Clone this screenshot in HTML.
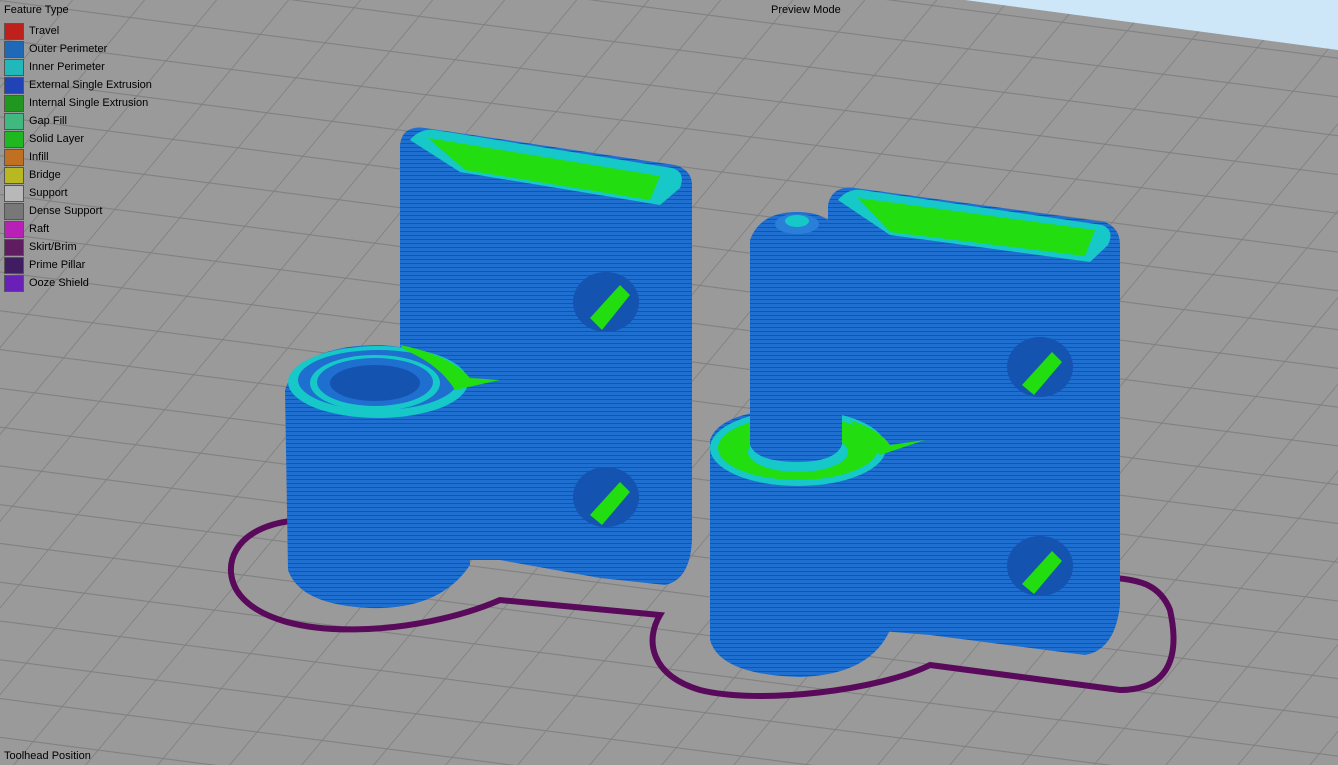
<!DOCTYPE html>
<html><head><style>
html,body{margin:0;padding:0;width:1338px;height:765px;overflow:hidden;background:#9a9a9a;font-family:"Liberation Sans",sans-serif;}
svg{position:absolute;left:0;top:0}
.t{position:absolute;font-size:11px;color:#000;}
.lg{position:absolute;left:4px;top:22px;}
.row{height:18px;display:flex;align-items:center;font-size:11px}
.sw{width:20px;height:17px;border:1px solid #555;box-sizing:border-box;margin-right:5px}
</style></head><body>
<svg width="1338" height="765" viewBox="0 0 1338 765">
<defs>
<pattern id="st" width="4" height="4" patternUnits="userSpaceOnUse">
<rect width="4" height="4" fill="#1f6fd0"/><rect y="3" width="4" height="1" fill="#1553b0"/>
</pattern>
<pattern id="gr" width="65" height="35" patternUnits="userSpaceOnUse" patternTransform="matrix(1 0.13 -0.83 1 0 0)">
<rect x="0" y="0" width="65" height="1" fill="#808080"/>
<rect x="0" y="0" width="1" height="35" fill="#808080"/>
</pattern>
</defs>
<rect width="1338" height="765" fill="url(#gr)"/>
<polygon points="965,0 1338,0 1338,50" fill="#cde6f8"/>
<!-- skirt -->
<path d="M300,520 C230,525 220,570 240,595 C280,645 420,635 500,600 L660,615 C645,640 650,675 700,690 C760,705 880,690 930,665 L1120,690 C1170,690 1180,655 1170,610 C1160,585 1140,580 1115,578" fill="none" stroke="#5a0a5a" stroke-width="6"/>
<!-- left block -->
<path d="M400,145 Q402,125 425,128 L675,165 Q692,170 692,185 L692,540 Q690,580 665,585 L600,578 L500,560 L400,560 Z" fill="url(#st)"/>
<path d="M410,140 Q420,128 435,130 L672,168 Q686,172 680,188 L660,205 L460,172 Z" fill="#17c8c8"/>
<path d="M428,138 L660,176 L650,200 L465,170 Z" fill="#22dd10"/>
<!-- left cylinder -->
<path d="M285,390 Q300,345 380,345 Q430,348 470,370 L500,380 L470,400 L470,565 Q440,610 370,608 Q300,605 288,570 Z" fill="url(#st)"/>
<ellipse cx="378" cy="382" rx="90" ry="36" fill="#17c8c8"/>
<ellipse cx="378" cy="380" rx="80" ry="30" fill="#1f6fd0"/>
<path d="M400,345 Q450,355 470,378 L500,380 L455,390 Q440,365 405,350 Z" fill="#22dd10"/>
<ellipse cx="375" cy="383" rx="65" ry="28" fill="#17c8c8"/>
<ellipse cx="375" cy="382" rx="58" ry="24" fill="#1f6fd0"/>
<ellipse cx="375" cy="383" rx="45" ry="18" fill="#1553b0"/>
<!-- holes left -->
<ellipse cx="606" cy="302" rx="33" ry="30" fill="#1553b0"/>
<path d="M590,318 L620,285 L630,295 L602,330 Z" fill="#22dd10"/>
<ellipse cx="606" cy="497" rx="33" ry="30" fill="#1553b0"/>
<path d="M590,515 L620,482 L630,492 L602,525 Z" fill="#22dd10"/>
<!-- right block -->
<path d="M828,205 Q832,185 855,188 L1105,222 Q1120,228 1120,245 L1120,605 Q1115,650 1085,655 L930,635 L870,630 L828,630 Z" fill="url(#st)"/>
<path d="M838,200 Q848,188 862,190 L1102,225 Q1115,230 1108,245 L1090,262 L890,235 Z" fill="#17c8c8"/>
<path d="M858,198 L1095,230 L1085,256 L890,232 Z" fill="#22dd10"/>
<!-- right cylinder -->
<path d="M710,440 Q720,410 800,408 Q860,410 890,440 L925,440 L890,460 L890,630 Q870,675 800,677 Q720,675 710,640 Z" fill="url(#st)"/>
<ellipse cx="798" cy="448" rx="88" ry="38" fill="#17c8c8"/>
<ellipse cx="798" cy="448" rx="80" ry="32" fill="#22dd10"/>
<path d="M850,420 Q880,430 890,445 L925,440 L880,455 Z" fill="#22dd10"/>
<ellipse cx="798" cy="452" rx="50" ry="20" fill="#17c8c8"/>
<!-- pin -->
<path d="M750,240 Q760,212 797,212 Q834,212 842,240 L842,445 Q835,462 797,462 Q757,462 750,445 Z" fill="url(#st)"/>
<ellipse cx="797" cy="224" rx="22" ry="10" fill="#2a80d8"/>
<ellipse cx="797" cy="221" rx="12" ry="6" fill="#17c8c8"/>
<!-- holes right -->
<ellipse cx="1040" cy="367" rx="33" ry="30" fill="#1553b0"/>
<path d="M1022,385 L1052,352 L1062,362 L1034,395 Z" fill="#22dd10"/>
<ellipse cx="1040" cy="566" rx="33" ry="30" fill="#1553b0"/>
<path d="M1022,584 L1052,551 L1062,561 L1034,594 Z" fill="#22dd10"/>
</svg>
<div class="t" style="left:4px;top:4px">Feature Type</div>
<div class="t" style="left:771px;top:4px">Preview Mode</div>
<div class="t" style="left:4px;top:750px">Toolhead Position</div>
<div class="lg">
<div class="row"><div class="sw" style="background:#c0201c"></div>Travel</div>
<div class="row"><div class="sw" style="background:#2068b8"></div>Outer Perimeter</div>
<div class="row"><div class="sw" style="background:#20b8b8"></div>Inner Perimeter</div>
<div class="row"><div class="sw" style="background:#2044b8"></div>External Single Extrusion</div>
<div class="row"><div class="sw" style="background:#209820"></div>Internal Single Extrusion</div>
<div class="row"><div class="sw" style="background:#40b880"></div>Gap Fill</div>
<div class="row"><div class="sw" style="background:#20b820"></div>Solid Layer</div>
<div class="row"><div class="sw" style="background:#c07020"></div>Infill</div>
<div class="row"><div class="sw" style="background:#b8b820"></div>Bridge</div>
<div class="row"><div class="sw" style="background:#b8b8b8"></div>Support</div>
<div class="row"><div class="sw" style="background:#787878"></div>Dense Support</div>
<div class="row"><div class="sw" style="background:#b820b8"></div>Raft</div>
<div class="row"><div class="sw" style="background:#601c60"></div>Skirt/Brim</div>
<div class="row"><div class="sw" style="background:#401c60"></div>Prime Pillar</div>
<div class="row"><div class="sw" style="background:#6820b8"></div>Ooze Shield</div>
</div>
</body></html>
